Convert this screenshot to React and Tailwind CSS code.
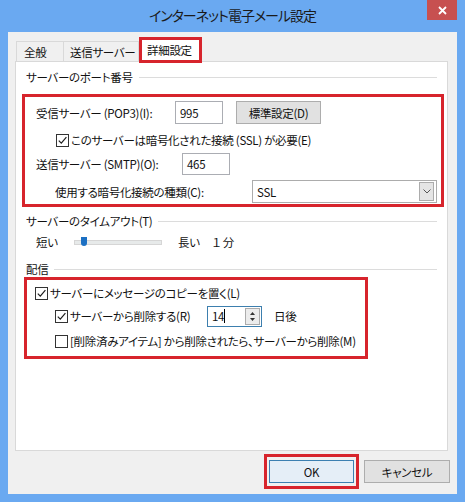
import React from "react";

const RED = "border-[#d7242c]";

function Check({ checked }) {
  return (
    <span className="w-[13px] h-[13px] border border-[#333333] bg-white flex items-center justify-center shrink-0">
      {checked && (
        <svg width="11" height="11" viewBox="0 0 11 11">
          <path d="M1.8 5.6 L4.3 8.2 L9.4 2.2" stroke="#1e1e1e" strokeWidth="1.2" fill="none" />
        </svg>
      )}
    </span>
  );
}

function GroupHead({ children }) {
  return (
    <div className="flex items-center gap-[6px] mx-[10px] h-[16px]">
      <span className="whitespace-nowrap">{children}</span>
      <div className="flex-1 h-px bg-[#dcdcdc]" />
    </div>
  );
}

export default function App() {
  return (
    <div className="w-[465px] h-[502px] bg-[#6aa9f1] flex flex-col text-[11.5px] tracking-[-0.3px] leading-[16px] text-[#111111] font-['Noto_Sans_CJK_JP','Liberation_Sans',sans-serif] [font-feature-settings:'palt']">
      {/* Title bar */}
      <div className="h-[32px] flex items-start shrink-0">
        <div className="w-[38px]" />
        <div className="flex-1 text-center pt-[5px] text-[14px] tracking-[-1px] leading-[20px] text-[#1a1a1a]">インターネット電子メール設定</div>
        <div className="w-[30px] h-[20px] mr-[8px] bg-[#c75050] flex items-center justify-center">
          <svg width="9" height="9" viewBox="0 0 9 9">
            <path d="M1 1 L8 8 M8 1 L1 8" stroke="#ffffff" strokeWidth="1.8" />
          </svg>
        </div>
      </div>

      {/* Client area */}
      <div className="mx-[8px] h-[462px] bg-[#f0f0f0] flex flex-col shrink-0">
        {/* Tabs */}
        <div className="mt-[5px] ml-[8px] flex items-end h-[24px] relative z-10">
          <div className="w-[48px] h-[20px] border border-b-0 border-[#d9d9d9] bg-[#f0f0f0] pl-[7px] pt-[2px] whitespace-nowrap">全般</div>
          <div className="w-[75px] h-[20px] border border-b-0 border-l-0 border-[#d9d9d9] bg-[#f0f0f0] pl-[6px] pt-[2px] whitespace-nowrap">送信サーバー</div>
          <div className={`w-[63px] h-[26px] -mb-[2px] border-[3px] ${RED} bg-white pl-[5px] pt-[2px] whitespace-nowrap`}>詳細設定</div>
        </div>

        {/* Panel */}
        <div className="ml-[7px] w-[433px] h-[390px] border border-[#d9d9d9] bg-white flex flex-col">
          <div className="mt-[7px]">
            <GroupHead>サーバーのポート番号</GroupHead>
          </div>

          <div className={`mt-[9px] ml-[6px] mr-[3px] border-[3px] ${RED} flex flex-col pl-[11px] pb-[1px]`}>
            <div className="mt-[4px] h-[23px] flex items-center">
              <span className="w-[139px] whitespace-nowrap">受信サーバー (POP3)(I):</span>
              <div className="w-[48px] h-[23px] border border-[#abadb3] bg-white pl-[4px] flex items-center">995</div>
              <div className="ml-[13px] w-[85px] h-[23px] border border-[#adadad] bg-[#e1e1e1] flex items-center justify-center">標準設定(D)</div>
            </div>
            <div className="mt-[8px] h-[16px] flex items-center pl-[20px] gap-[2px]">
              <Check checked />
              <span className="whitespace-nowrap">このサーバーは暗号化された接続 (SSL) が必要(E)</span>
            </div>
            <div className="mt-[5px] h-[22px] flex items-center">
              <span className="w-[146px] whitespace-nowrap">送信サーバー (SMTP)(O):</span>
              <div className="w-[48px] h-[22px] border border-[#abadb3] bg-white pl-[4px] flex items-center">465</div>
            </div>
            <div className="mt-[5px] h-[23px] flex items-center pl-[19px]">
              <span className="w-[197px] whitespace-nowrap">使用する暗号化接続の種類(C):</span>
              <div className="w-[185px] h-[23px] border border-[#acacac] bg-white flex items-center pl-[4px] pr-[2px]">
                <span className="flex-1">SSL</span>
                <div className="w-[15px] h-[19px] border border-[#acacac] bg-[#e5e5e5] flex items-center justify-center">
                  <svg width="8" height="5" viewBox="0 0 8 5">
                    <path d="M0.5 0.5 L4 4 L7.5 0.5" stroke="#555555" strokeWidth="1" fill="none" />
                  </svg>
                </div>
              </div>
            </div>
          </div>

          <div className="mt-[6px]">
            <GroupHead>サーバーのタイムアウト(T)</GroupHead>
          </div>
          <div className="mt-[5px] h-[16px] flex items-center ml-[20px]">
            <span className="w-[38px]">短い</span>
            <div className="w-[88px] h-[5px] border border-[#d6d6d6] bg-[#e7eaea] flex items-center">
              <div className="ml-[6px] w-[6px] h-[9px] bg-[#1c70c3] rounded-b-[3px] -mt-[1px]" />
            </div>
            <span className="ml-[16px] w-[34px]">長い</span>
            <span>１ 分</span>
          </div>

          <div className="mt-[11px]">
            <GroupHead>配信</GroupHead>
          </div>

          <div className={`ml-[8px] w-[344px] border-[3px] ${RED} flex flex-col pt-[5px] pb-[7px]`}>
            <div className="h-[16px] flex items-center pl-[8px] gap-[2px]">
              <Check checked />
              <span className="whitespace-nowrap">サーバーにメッセージのコピーを置く(L)</span>
            </div>
            <div className="mt-[4px] h-[22px] flex items-center pl-[28px]">
              <div className="w-[152px] flex items-center gap-[2px]">
                <Check checked />
                <span className="whitespace-nowrap">サーバーから削除する(R)</span>
              </div>
              <div className="w-[55px] h-[21px] border border-[#3d7fae] bg-white flex items-center pl-[4px] pr-px">
                <span className="flex-1 flex items-center">14<span className="w-px h-[14px] bg-black" /></span>
                <div className="w-[15px] h-[17px] border border-[#acacac] bg-[#ececec] flex flex-col items-center justify-center gap-[3px]">
                  <svg width="5" height="3" viewBox="0 0 5 3"><path d="M0 3 L2.5 0 L5 3 Z" fill="#333333" /></svg>
                  <svg width="5" height="3" viewBox="0 0 5 3"><path d="M0 0 L2.5 3 L5 0 Z" fill="#333333" /></svg>
                </div>
              </div>
              <span className="ml-[12px]">日後</span>
            </div>
            <div className="mt-[6px] h-[16px] flex items-center pl-[28px] gap-[2px]">
              <Check />
              <span className="whitespace-nowrap">[削除済みアイテム] から削除されたら、サーバーから削除(M)</span>
            </div>
          </div>
        </div>

        {/* Buttons */}
        <div className="mt-[3px] flex justify-end items-center mr-[7px]">
          <div className={`w-[95px] h-[35px] border-[3px] ${RED} flex items-center justify-center`}>
            <div className="w-[85px] h-[23px] border border-[#3c7fb1] bg-[#e5eef7] flex items-center justify-center">OK</div>
          </div>
          <div className="ml-[5px] w-[86px] h-[23px] border border-[#adadad] bg-[#e1e1e1] flex items-center justify-center">キャンセル</div>
        </div>
      </div>
    </div>
  );
}
